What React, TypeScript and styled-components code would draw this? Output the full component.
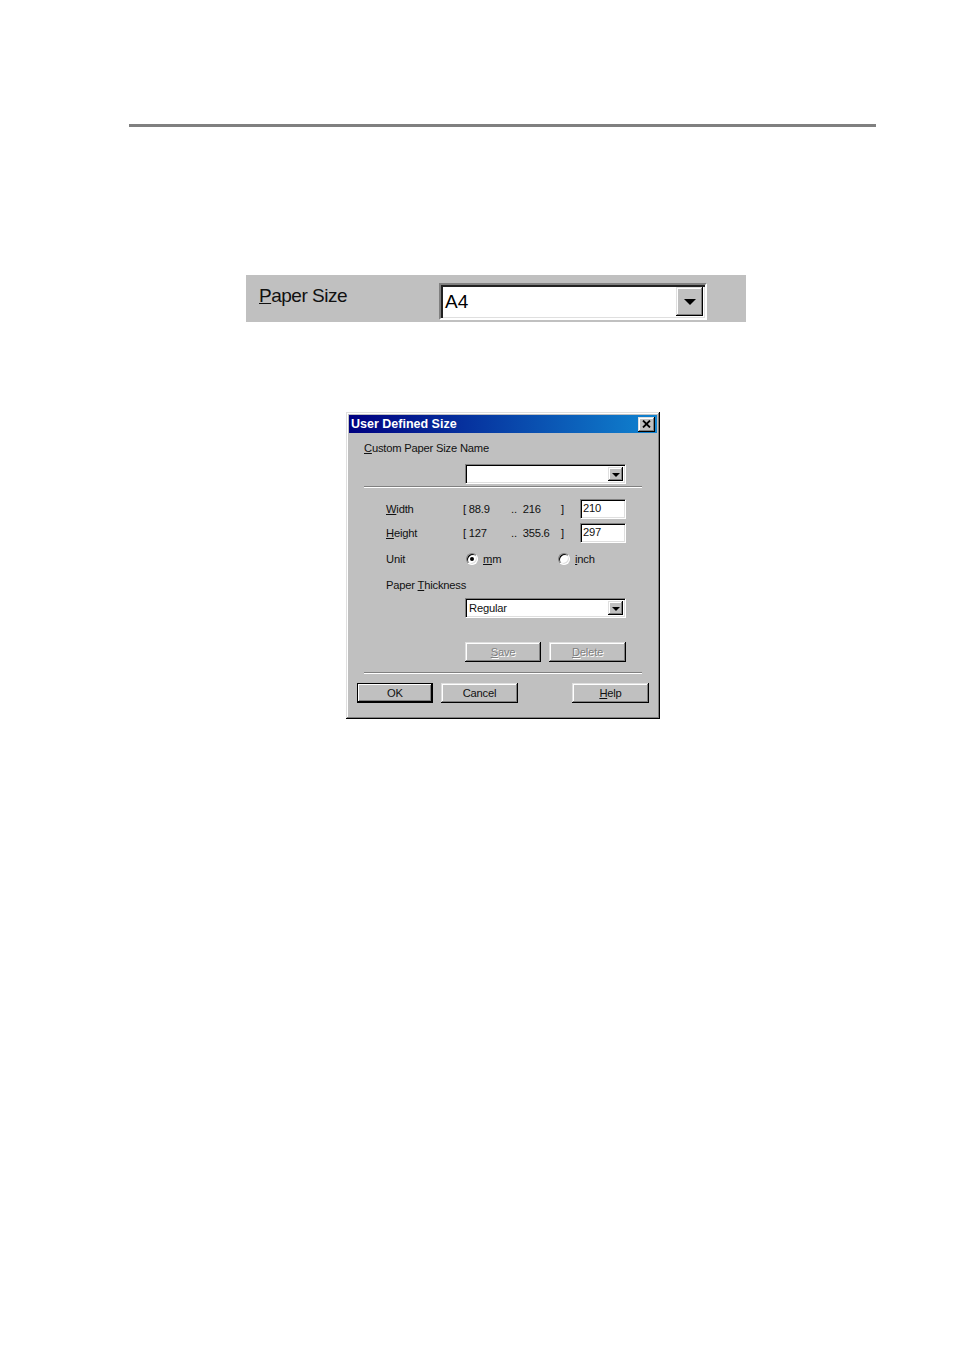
import React from 'react';
import styled, { createGlobalStyle, css } from 'styled-components';

const GlobalStyle = createGlobalStyle`
  html, body {
    margin: 0;
    padding: 0;
    background: #fff;
  }
  body {
    font-family: 'Liberation Sans', Arial, sans-serif;
    color: #000;
  }
`;

const Page = styled.div`
  width: 954px;
  height: 1352px;
  padding-top: 124px;
  box-sizing: border-box;
`;

const Rule = styled.div`
  margin-left: 129px;
  width: 747px;
  height: 3px;
  background: #808080;
`;

const Strip = styled.div`
  margin: 148px 0 0 246px;
  width: 500px;
  height: 47px;
  background: #c0c0c0;
  display: flex;
  align-items: flex-start;
  padding: 8px 0 0 13px;
  box-sizing: border-box;
`;

const StripLabel = styled.div`
  width: 180px;
  font-size: 19px;
  line-height: 26px;
  color: #111;
  letter-spacing: -0.5px;
`;

const sunken = css`
  background: #fff;
  box-sizing: border-box;
  border-style: solid;
  border-color: #808080 #fff #fff #808080;
`;

const BigCombo = styled.div`
  ${sunken};
  width: 268px;
  height: 37px;
  border-width: 2px;
  display: flex;
  align-items: stretch;
  box-shadow: inset 2px 2px #222, inset -1px -1px #dfdfdf;
  padding: 2px;
`;

const BigComboText = styled.div`
  flex: 1;
  font-size: 19px;
  line-height: 30px;
  padding-left: 2px;
`;

const raised = css`
  background: #c0c0c0;
  box-sizing: border-box;
  box-shadow: inset -1px -1px #000, inset 1px 1px #dfdfdf, inset -2px -2px #808080,
    inset 2px 2px #fff;
`;

const DropButton = styled.div<{ $size: number }>`
  ${raised};
  width: ${(p) => p.$size}px;
  display: flex;
  align-items: center;
  justify-content: center;
`;

const Arrow = styled.div<{ $w: number }>`
  width: 0;
  height: 0;
  border-left: ${(p) => p.$w}px solid transparent;
  border-right: ${(p) => p.$w}px solid transparent;
  border-top: ${(p) => p.$w}px solid #000;
  margin-top: 1px;
`;

const Dialog = styled.div`
  margin: 90px 0 0 346px;
  width: 314px;
  height: 307px;
  background: #c0c0c0;
  box-sizing: border-box;
  padding: 3px;
  box-shadow: inset -1px -1px #000, inset 1px 1px #dfdfdf, inset -2px -2px #808080,
    inset 2px 2px #fff;
  display: flex;
  flex-direction: column;
  font-size: 11.2px;
  letter-spacing: -0.2px;
  color: #111;
`;

const TitleBar = styled.div`
  height: 18px;
  flex-shrink: 0;
  background: linear-gradient(90deg, #000080 0%, #1084d0 100%);
  display: flex;
  align-items: center;
  justify-content: space-between;
  padding: 0 2px 0 2px;
`;

const Title = styled.div`
  color: #fff;
  font-weight: bold;
  font-size: 12.5px;
  letter-spacing: 0;
`;

const CloseBox = styled.div`
  ${raised};
  width: 17px;
  height: 15px;
  display: flex;
  align-items: center;
  justify-content: center;
`;

const Body = styled.div`
  display: flex;
  flex-direction: column;
  padding-left: 15px;
`;

const Label = styled.div<{ $mt: number; $indent?: number }>`
  margin-top: ${(p) => p.$mt}px;
  margin-left: ${(p) => p.$indent || 0}px;
  height: 14px;
  line-height: 14px;
`;

const Combo = styled.div<{ $mt: number }>`
  ${sunken};
  margin: ${(p) => p.$mt}px 0 0 101px;
  width: 161px;
  height: 20px;
  flex-shrink: 0;
  border-width: 1px;
  box-shadow: inset 1px 1px #000, inset -1px -1px #dfdfdf;
  padding: 2px;
  display: flex;
`;

const ComboText = styled.div`
  flex: 1;
  line-height: 14px;
  padding-left: 1px;
`;

const Separator = styled.div<{ $mt: number }>`
  margin-top: ${(p) => p.$mt}px;
  width: 278px;
  height: 0;
  flex-shrink: 0;
  border-top: 1px solid #808080;
  border-bottom: 1px solid #fff;
`;

const FieldRow = styled.div<{ $mt: number }>`
  margin: ${(p) => p.$mt}px 0 0 22px;
  height: 20px;
  flex-shrink: 0;
  display: flex;
  align-items: center;
`;

const Cell = styled.div<{ $w: number }>`
  width: ${(p) => p.$w}px;
  flex-shrink: 0;
  display: flex;
  align-items: center;
`;

const NumberInput = styled.div`
  ${sunken};
  width: 46px;
  height: 20px;
  border-width: 1px;
  box-shadow: inset 1px 1px #000, inset -1px -1px #dfdfdf;
  line-height: 16px;
  padding-left: 2px;
`;

const Radio = styled.span<{ $checked?: boolean }>`
  width: 12px;
  height: 12px;
  border-radius: 50%;
  box-sizing: border-box;
  background: #fff;
  border: 1px solid;
  border-color: #808080 #fff #fff #808080;
  box-shadow: inset 1px 1px #000, inset -1px -1px #dfdfdf;
  margin: 0 5px 0 3px;
  display: inline-flex;
  align-items: center;
  justify-content: center;

  &::after {
    content: '';
    width: 4px;
    height: 4px;
    border-radius: 50%;
    background: ${(p) => (p.$checked ? '#000' : 'transparent')};
  }
`;

const ButtonRow = styled.div<{ $mt: number; $ml: number }>`
  margin: ${(p) => p.$mt}px 0 0 ${(p) => p.$ml}px;
  display: flex;
  flex-shrink: 0;
`;

const Button = styled.div<{ $w: number; $gap?: number; $disabled?: boolean; $default?: boolean }>`
  ${raised};
  width: ${(p) => p.$w}px;
  height: 20px;
  margin-right: ${(p) => p.$gap || 0}px;
  display: flex;
  align-items: center;
  justify-content: center;
  color: ${(p) => (p.$disabled ? '#808080' : '#111')};
  text-shadow: ${(p) => (p.$disabled ? '1px 1px #fff' : 'none')};
  ${(p) =>
    p.$default &&
    css`
      box-shadow: inset 0 0 0 1px #000, inset -2px -2px #000, inset 2px 2px #fff,
        inset -3px -3px #808080;
    `}
`;

const Key = styled.span`
  text-decoration: underline;
  text-underline-offset: 1px;
`;

const App: React.FC = () => {
  return (
    <>
      <GlobalStyle />
      <Page>
        <Rule />

        <Strip>
          <StripLabel>
            <Key>P</Key>aper Size
          </StripLabel>
          <BigCombo>
            <BigComboText>A4</BigComboText>
            <DropButton $size={27}>
              <Arrow $w={6} />
            </DropButton>
          </BigCombo>
        </Strip>

        <Dialog>
          <TitleBar>
            <Title>User Defined Size</Title>
            <CloseBox>
              <svg width="9" height="8" viewBox="0 0 9 8">
                <path d="M1 0.5 L8 7.5 M8 0.5 L1 7.5" stroke="#000" strokeWidth="1.8" />
              </svg>
            </CloseBox>
          </TitleBar>

          <Body>
            <Label $mt={8}>
              <Key>C</Key>ustom Paper Size Name
            </Label>
            <Combo $mt={9}>
              <ComboText />
              <DropButton $size={15}>
                <Arrow $w={4} />
              </DropButton>
            </Combo>
            <Separator $mt={2} />

            <FieldRow $mt={11}>
              <Cell $w={77}>
                <Key>W</Key>idth
              </Cell>
              <Cell $w={48}>[ 88.9</Cell>
              <Cell $w={50}>.. &nbsp;216</Cell>
              <Cell $w={19}>]</Cell>
              <NumberInput>210</NumberInput>
            </FieldRow>
            <FieldRow $mt={4}>
              <Cell $w={77}>
                <Key>H</Key>eight
              </Cell>
              <Cell $w={48}>[ 127</Cell>
              <Cell $w={50}>.. &nbsp;355.6</Cell>
              <Cell $w={19}>]</Cell>
              <NumberInput>297</NumberInput>
            </FieldRow>
            <FieldRow $mt={6}>
              <Cell $w={77}>Unit</Cell>
              <Cell $w={92}>
                <Radio $checked />
                <Key>m</Key>m
              </Cell>
              <Cell $w={60}>
                <Radio />
                <Key>i</Key>nch
              </Cell>
            </FieldRow>

            <Label $mt={9} $indent={22}>
              Paper <Key>T</Key>hickness
            </Label>
            <Combo $mt={6}>
              <ComboText>Regular</ComboText>
              <DropButton $size={15}>
                <Arrow $w={4} />
              </DropButton>
            </Combo>

            <ButtonRow $mt={24} $ml={101}>
              <Button $w={76} $gap={8} $disabled>
                <Key>S</Key>ave
              </Button>
              <Button $w={77} $disabled>
                <Key>D</Key>elete
              </Button>
            </ButtonRow>

            <Separator $mt={10} />

            <ButtonRow $mt={9} $ml={-7}>
              <Button $w={76} $gap={8} $default>
                OK
              </Button>
              <Button $w={77} $gap={54}>
                Cancel
              </Button>
              <Button $w={77}>
                <Key>H</Key>elp
              </Button>
            </ButtonRow>
          </Body>
        </Dialog>
      </Page>
    </>
  );
};

export default App;
